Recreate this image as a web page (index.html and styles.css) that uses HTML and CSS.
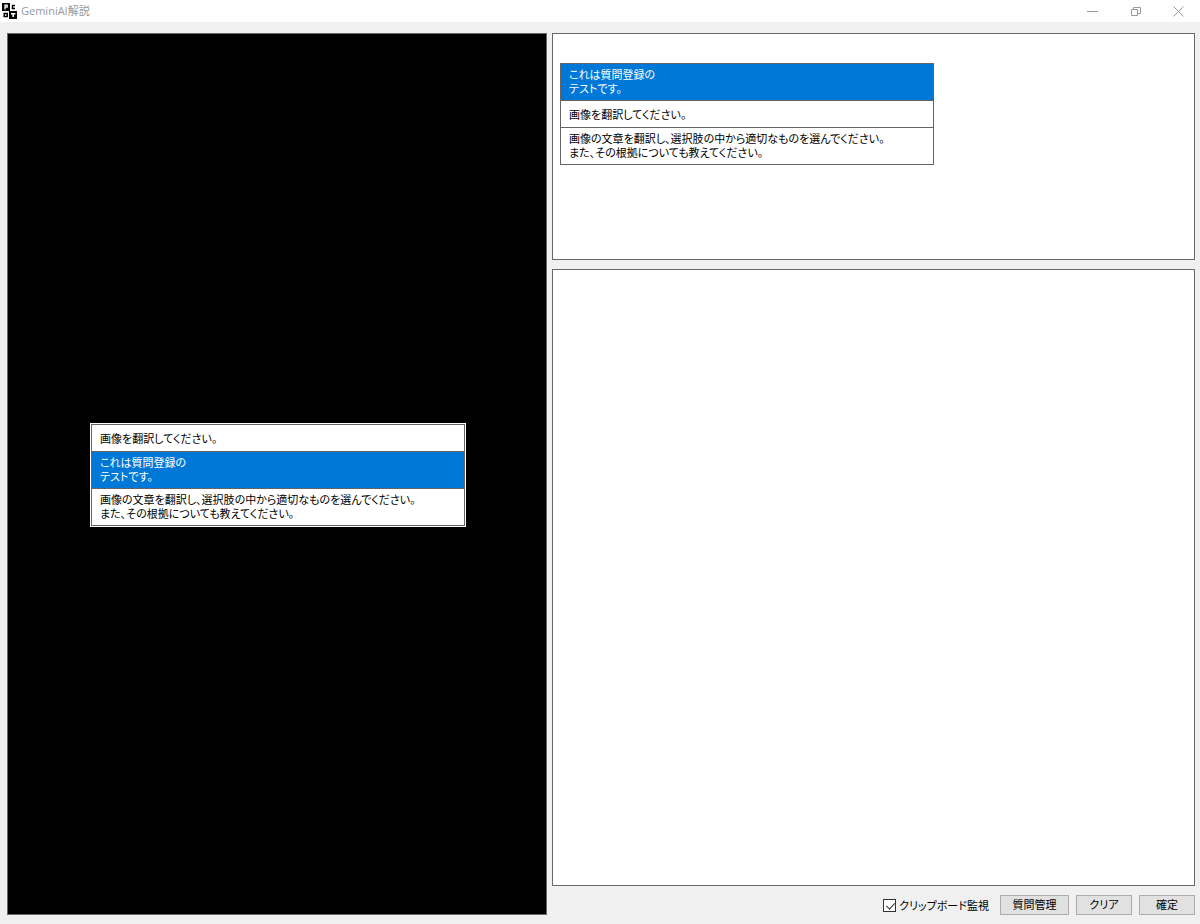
FILE: index.html
```
<!DOCTYPE html>
<html lang="ja">
<head>
  <meta charset="UTF-8" />
  <meta name="viewport" content="width=device-width, initial-scale=1.0"/>
  <title>GeminiAI解説</title>
  <link rel="stylesheet" href="styles.css">
</head>
<body>
  <header class="titlebar">
    <svg class="logo" viewBox="0 0 15 16" aria-hidden="true">
      <rect x="0" y="0" width="8" height="8" fill="#000"/>
      <rect x="7" y="8" width="8" height="8" fill="#000"/>
      <path d="M3 6.5V2.2h2.2v2H3" fill="none" stroke="#fff" stroke-width="1.2"/>
      <path d="M13 2.5h-2.5v3H13" fill="none" stroke="#000" stroke-width="1.5"/>
      <rect x="2.2" y="10.5" width="3" height="3" fill="none" stroke="#000" stroke-width="1.5"/>
      <path d="M9 10.7h4.4M11.2 10.7V14" fill="none" stroke="#fff" stroke-width="1.5"/>
    </svg>
    <h1 class="title">GeminiAI解説</h1>
    <div class="window-buttons">
      <button class="window-btn" type="button" aria-label="最小化">
        <svg viewBox="0 0 11 11"><path d="M0 5.5h11"/></svg>
      </button>
      <button class="window-btn" type="button" aria-label="元に戻す">
        <svg viewBox="0 0 11 11"><path d="M1.5 3.5h6v6h-6zM3.5 3.5v-2h7v6h-3"/></svg>
      </button>
      <button class="window-btn" type="button" aria-label="閉じる">
        <svg viewBox="0 0 11 11"><path d="M.5 .5l10 10M10.5 .5l-10 10"/></svg>
      </button>
    </div>
  </header>

  <main class="content">
    <section class="panel preview">
      <div class="frame">
        <ul class="questions">
          <li class="question short">画像を翻訳してください。</li>
          <li class="question selected">これは質問登録の<br>テストです。</li>
          <li class="question">画像の文章を翻訳し、選択肢の中から適切なものを選んでください。<br>また、その根拠についても教えてください。</li>
        </ul>
      </div>
    </section>

    <div class="side">
      <section class="panel prompt">
        <ul class="questions">
          <li class="question selected">これは質問登録の<br>テストです。</li>
          <li class="question short">画像を翻訳してください。</li>
          <li class="question">画像の文章を翻訳し、選択肢の中から適切なものを選んでください。<br>また、その根拠についても教えてください。</li>
        </ul>
      </section>

      <textarea class="panel answer" aria-label="解説" readonly></textarea>

      <footer class="actions">
        <label class="watch" for="watch">
          <input class="check" type="checkbox" id="watch" checked>
          クリップボード監視
        </label>
        <button class="btn wide" type="button">質問管理</button>
        <button class="btn" type="button">クリア</button>
        <button class="btn" type="button">確定</button>
      </footer>
    </div>
  </main>
</body>
</html>
```
FILE: styles.css
```
* {
  margin: 0;
  padding: 0;
  box-sizing: border-box;
}

body {
  height: 100vh;
  display: flex;
  flex-direction: column;
  background-color: #f0f0f0;
  color: #000;
  font-family: "Noto Sans CJK JP", sans-serif;
  font-size: 11px;
  line-height: 14px;
  font-feature-settings: "palt";
}

/* Title bar */
.titlebar {
  height: 22px;
  display: flex;
  align-items: center;
  padding-left: 2px;
  background-color: #fff;
}

.logo {
  width: 15px;
  height: 16px;
}

.title {
  flex: 1;
  margin-left: 4px;
  color: #999;
  font-family: "Open Sans", "Noto Sans CJK JP", sans-serif;
  font-size: 11px;
  font-weight: 400;
}

.window-buttons {
  display: flex;
  height: 20px;
}

.window-btn {
  width: 43px;
  display: flex;
  align-items: center;
  justify-content: center;
  border: none;
  background: none;
}

.window-btn svg {
  width: 11px;
  height: 11px;
  fill: none;
  stroke: #999;
}

/* Panels */
.content {
  flex: 1;
  min-height: 0;
  display: grid;
  grid-template-columns: 540fr 643fr;
  gap: 5px;
  padding: 11px 5px 9px 7px;
}

.panel {
  border: 1px solid #696969;
  background-color: #fff;
}

.preview {
  display: flex;
  align-items: center;
  justify-content: center;
  padding: 2px 0 0 2px;
  background-color: #000;
}

.side {
  min-width: 0;
  display: flex;
  flex-direction: column;
}

.prompt {
  height: 227px;
  padding: 29px 7px;
}

.answer {
  flex: 1;
  width: 100%;
  margin-top: 9px;
  resize: none;
  outline: none;
}

/* Question list */
.frame {
  padding: 1px;
  background-color: #fff;
}

.questions {
  width: 374px;
  max-width: 100%;
  border: 1px solid #646464;
  background-color: #fff;
  list-style: none;
}

.question {
  padding: 3px 8px 5px;
}

.short {
  padding: 6px 8px;
}

.question + .question {
  border-top: 1px solid #646464;
}

.selected {
  background-color: #0078d7;
  color: #fff;
}

/* Bottom row */
.actions {
  display: flex;
  align-items: center;
  justify-content: flex-end;
  gap: 7px;
  margin-top: 9px;
}

.watch {
  display: flex;
  align-items: center;
  gap: 3px;
  margin-right: 4px;
}

.check {
  position: relative;
  width: 13px;
  height: 13px;
  appearance: none;
  border: 1px solid #333;
  background-color: #fff;
}

.check:checked::after {
  content: "";
  position: absolute;
  left: 4px;
  top: 1px;
  width: 4px;
  height: 7px;
  border: solid #333;
  border-width: 0 1px 1px 0;
  transform: rotate(42deg);
}

.btn {
  width: 56px;
  height: 20px;
  padding-bottom: 2px;
  border: 1px solid #adadad;
  background-color: #e1e1e1;
  color: #000;
  font: inherit;
  font-feature-settings: inherit;
}

.wide {
  width: 69px;
}

.btn:hover {
  border-color: #0078d7;
  background-color: #e5f1fb;
}
```
